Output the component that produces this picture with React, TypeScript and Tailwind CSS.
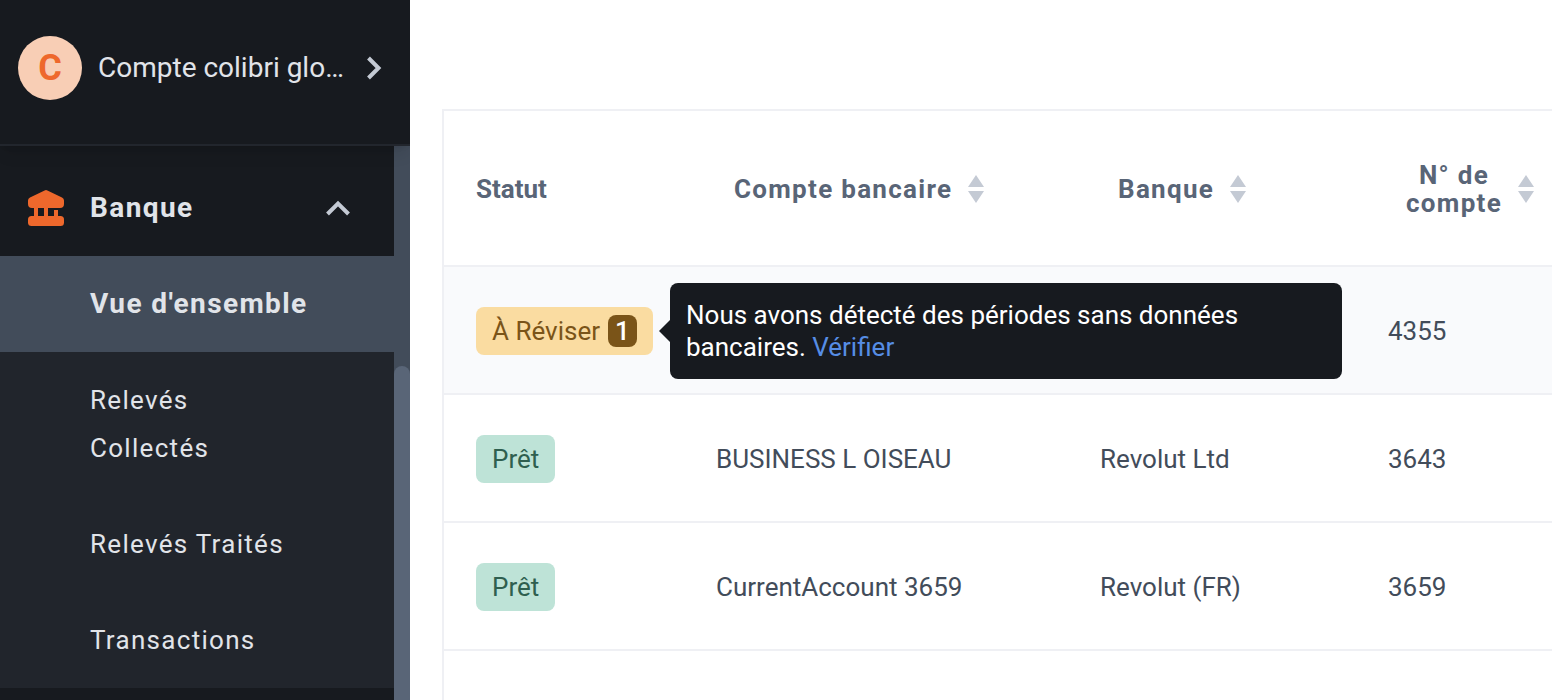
import React from "react"

interface NavItem {
	label: string
	active?: boolean
}

interface Account {
	status: "review" | "ready"
	name: string
	bank: string
	number: string
}

const navItems: NavItem[] = [
	{ label: "Vue d'ensemble", active: true },
	{ label: "Relevés Collectés" },
	{ label: "Relevés Traités" },
	{ label: "Transactions" },
]

const accounts: Account[] = [
	{ status: "review", name: "", bank: "", number: "4355" },
	{ status: "ready", name: "BUSINESS L OISEAU", bank: "Revolut Ltd", number: "3643" },
	{ status: "ready", name: "CurrentAccount 3659", bank: "Revolut (FR)", number: "3659" },
]

const BankIcon: React.FC = () => (
	<svg className="w-9 h-9 shrink-0" viewBox="0 0 36 36" fill="#ee682c" aria-hidden="true">
		<path d="M16.6 0.4a3 3 0 0 1 2.8 0L34 7.5A3.5 3.5 0 0 1 36 10.7V14a4 4 0 0 1-4 4H4a4 4 0 0 1-4-4v-3.3A3.5 3.5 0 0 1 2 7.5Z" />
		<path d="M6 17h4v10H6zM16 17h4v10h-4zM26 20h4v7h-4z" />
		<rect y="26" width="36" height="10" rx="3.5" />
	</svg>
)

const SortIcon: React.FC = () => (
	<svg className="w-4 h-7 shrink-0" viewBox="0 0 16 28" fill="#c4cad4" aria-hidden="true">
		<path d="M8 0l8 12H0zM8 28l8-12H0z" />
	</svg>
)

const Sidebar: React.FC = () => {
	return (
		<aside className="w-[410px] shrink-0 flex flex-col overflow-hidden bg-[#171a1f] text-[#e1e4e9]">
			<button
				type="button"
				className="relative z-10 flex items-center pl-[18px] pr-7 pt-9 pb-11 border-b-2 border-[#22262d] bg-[#171a1f] shadow-lg text-left"
			>
				<span className="w-16 h-16 rounded-full bg-[#f8ceb5] text-[#ee682c] text-4xl font-bold flex items-center justify-center">
					C
				</span>
				<span className="flex-1 pl-4 text-[28px] leading-8 whitespace-nowrap">Compte colibri glo…</span>
				<svg className="w-4 h-6" viewBox="0 0 16 24" fill="none" stroke="#c4cad4" strokeWidth="4" aria-hidden="true">
					<path d="M2.5 2l10 10-10 10" />
				</svg>
			</button>
			<div className="flex-1 flex">
				<nav className="flex-1 min-w-0 flex flex-col">
					<button type="button" className="flex items-center pl-7 pr-11 pt-[38px] pb-6 h-[110px] text-left">
						<BankIcon />
						<span className="flex-1 pl-[26px] text-[28px] leading-12 font-bold tracking-wider">Banque</span>
						<svg className="w-6 h-4" viewBox="0 0 24 16" fill="none" stroke="#c4cad4" strokeWidth="4" aria-hidden="true">
							<path d="M1.5 14L12 3.5 22.5 14" />
						</svg>
					</button>
					<ul className="bg-[#21252c]">
						{navItems.map((item) => (
							<li key={item.label}>
								<a
									href="#"
									className={
										item.active
											? "block py-6 pl-[90px] bg-[#424c5a] text-[28px] leading-12 font-bold tracking-wider"
											: "block py-6 pl-[90px] pr-24 text-[26px] leading-12 tracking-wider"
									}
								>
									{item.label}
								</a>
							</li>
						))}
					</ul>
				</nav>
				<div className="w-4 shrink-0 pt-[220px] flex flex-col bg-[#424c5a]">
					<div className="flex-1 rounded-t-full bg-[#596577]"></div>
				</div>
			</div>
		</aside>
	)
}

const SortHeader: React.FC<{ title: string }> = ({ title }) => (
	<th className="h-[156px] p-0 pt-0.5 border-b-2 border-[#eff0f4]">
		<button type="button" className="flex items-center gap-4 pl-[50px] pr-[18px] font-bold leading-7 tracking-wider">
			<span>{title}</span>
			<SortIcon />
		</button>
	</th>
)

const ReviewBadge: React.FC = () => (
	<div className="relative inline-flex items-center gap-2 h-12 px-4 rounded-lg bg-[#fadca1] text-[#7a5418] align-middle">
		<span className="whitespace-nowrap">À Réviser</span>
		<span className="w-[29px] h-8 rounded-lg bg-[#7a5418] text-white font-medium flex items-center justify-center">
			1
		</span>
		<div
			role="tooltip"
			className="absolute left-full top-1/2 -translate-y-1/2 ml-[17px] w-2xl p-4 rounded-lg bg-[#171a1f] text-white leading-8"
		>
			<svg
				className="absolute right-full top-1/2 -translate-y-1/2 w-[11px] h-[22px]"
				viewBox="0 0 11 22"
				fill="#171a1f"
				aria-hidden="true"
			>
				<path d="M11 0v22L0 11z" />
			</svg>
			Nous avons détecté des périodes sans données bancaires.{" "}
			<a href="#" className="text-[#568de5]">
				Vérifier
			</a>
		</div>
	</div>
)

const App: React.FC = () => {
	return (
		<div className="min-h-screen flex overflow-hidden bg-white font-[Roboto,sans-serif]">
			<Sidebar />
			<main className="flex-1 min-w-0 flex flex-col pl-8 pt-[109px]">
				<div className="flex-1 border-l-2 border-t-2 border-[#eff0f4]">
					<table className="w-full table-fixed border-separate border-spacing-0 text-[26px] leading-8 text-[#424c5a]">
						<colgroup>
							<col className="w-60" />
							<col className="w-96" />
							<col className="w-72" />
							<col />
						</colgroup>
						<thead className="text-[#596577]">
							<tr>
								<th className="h-[156px] p-0 pt-0.5 pl-8 border-b-2 border-[#eff0f4] text-left font-bold">Statut</th>
								<SortHeader title="Compte bancaire" />
								<SortHeader title="Banque" />
								<SortHeader title="N° de compte" />
							</tr>
						</thead>
						<tbody>
							{accounts.map((account) => (
								<tr
									key={account.number}
									className={
										account.status === "review"
											? "bg-[#f9fafc] *:h-32 *:p-0 *:pt-0.5 *:pl-8 *:border-b-2 *:border-[#eff0f4]"
											: "*:h-32 *:p-0 *:pt-0.5 *:pl-8 *:border-b-2 *:border-[#eff0f4]"
									}
								>
									<td>
										{account.status === "review" ? (
											<ReviewBadge />
										) : (
											<span className="inline-flex items-center h-12 px-4 rounded-lg bg-[#bee3d7] text-[#2f5f4f] align-middle">
												Prêt
											</span>
										)}
									</td>
									<td>{account.name}</td>
									<td>{account.bank}</td>
									<td>{account.number}</td>
								</tr>
							))}
						</tbody>
					</table>
				</div>
			</main>
		</div>
	)
}

export default App
